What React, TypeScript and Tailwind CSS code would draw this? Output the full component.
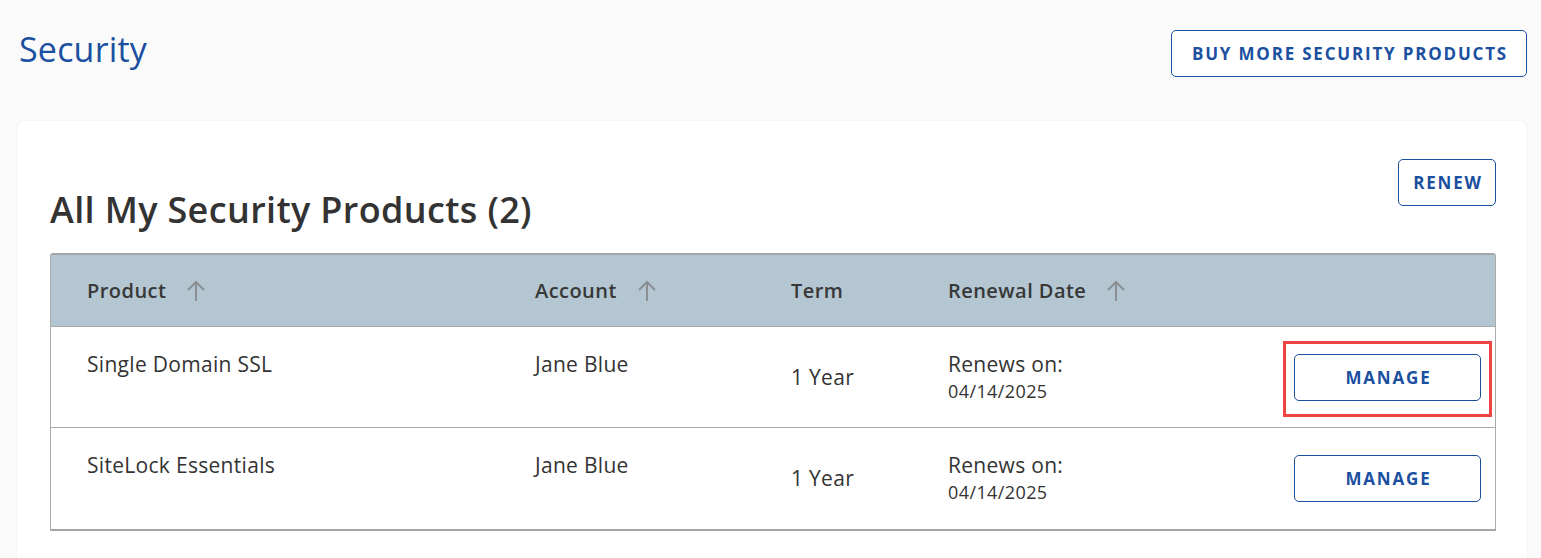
import React from 'react';

const SortArrow = () => (
    <svg width="20" height="22" viewBox="0 0 20 22" fill="none" stroke="#8a8f93" strokeWidth="2" className="ml-5">
        <path d="M10 21V2M2 10l8-8 8 8" />
    </svg>
);

const rows = [
    { product: 'Single Domain SSL', account: 'Jane Blue', term: '1 Year', date: '04/14/2025', highlight: true },
    { product: 'SiteLock Essentials', account: 'Jane Blue', term: '1 Year', date: '04/14/2025', highlight: false },
];

const btn = 'border border-[#1b4f9f] rounded-[5px] text-[#1b4f9f] font-bold text-[17px] tracking-[1.8px] bg-white';

const App: React.FC = () => {
    return (
        <div className="min-h-[558px] bg-[#fafafa] text-[#333] font-['Open_Sans',sans-serif] pl-[17px] pr-[14px]">
            <div className="flex items-start justify-between pt-[30px] h-[121px]">
                <h1 className="text-[34px] leading-[40px] text-[#1b4f9f] pl-[2px] -mt-[1px] tracking-[0.2px]">Security</h1>
                <button className={`h-[47px] w-[356px] pl-[2px] ${btn}`}>
                    BUY MORE SECURITY PRODUCTS
                </button>
            </div>

            <div className="bg-white rounded-t-[8px] shadow-[0_0_3px_rgba(0,0,0,0.06)] pl-[33px] pr-[31px] pt-[38px] pb-[30px]">
                <div className="flex items-start justify-between h-[94px]">
                    <h2 className="text-[36px] font-semibold leading-[40px] mt-[31px] tracking-[0.35px]">All My Security Products (2)</h2>
                    <button className={`h-[47px] w-[98px] pl-[2px] ${btn}`}>
                        RENEW
                    </button>
                </div>

                <div className="border-l border-r border-[#aaa] border-t-2 border-t-[#a5a5a5] border-b-2 border-b-[#a5a5a5] rounded-t-[3px]">
                    <div className="grid grid-cols-[484px_256px_157px_1fr] items-center h-[72px] bg-[#b3c6d1] text-[20px] font-semibold tracking-[0.45px] text-[#383838] border-b border-[#aaa]">
                        <div className="pl-[36px] flex items-center">Product <SortArrow /></div>
                        <div className="flex items-center">Account <SortArrow /></div>
                        <div>Term</div>
                        <div className="flex items-center">Renewal Date <SortArrow /></div>
                    </div>
                    {rows.map((r, i) => (
                        <div
                            key={r.product}
                            className={`grid grid-cols-[484px_256px_157px_1fr_auto] h-[101px] text-[21px] tracking-[0.3px] ${i < rows.length - 1 ? 'border-b border-[#aaa]' : ''}`}
                        >
                            <div className="pl-[36px] pt-[23px] leading-[28px]">{r.product}</div>
                            <div className="pt-[23px] leading-[28px]">{r.account}</div>
                            <div className="self-center leading-[28px] pb-[1px]">{r.term}</div>
                            <div className="pt-[23px]">
                                <div className="leading-[28px]">Renews on:</div>
                                <div className="text-[18px] tracking-[0.4px] leading-[24px] mt-[1px]">{r.date}</div>
                            </div>
                            <div className="pr-[14px] pt-[27px] tracking-normal">
                                <div className="relative">
                                    <button className={`h-[47px] w-[187px] pl-[2px] ${btn}`}>
                                        MANAGE
                                    </button>
                                    {r.highlight && (
                                        <span className="absolute -top-[13px] -left-[11px] -right-[11px] -bottom-[16px] border-[3px] border-[#ef4444] pointer-events-none" />
                                    )}
                                </div>
                            </div>
                        </div>
                    ))}
                </div>
            </div>
        </div>
    );
};

export default App;
